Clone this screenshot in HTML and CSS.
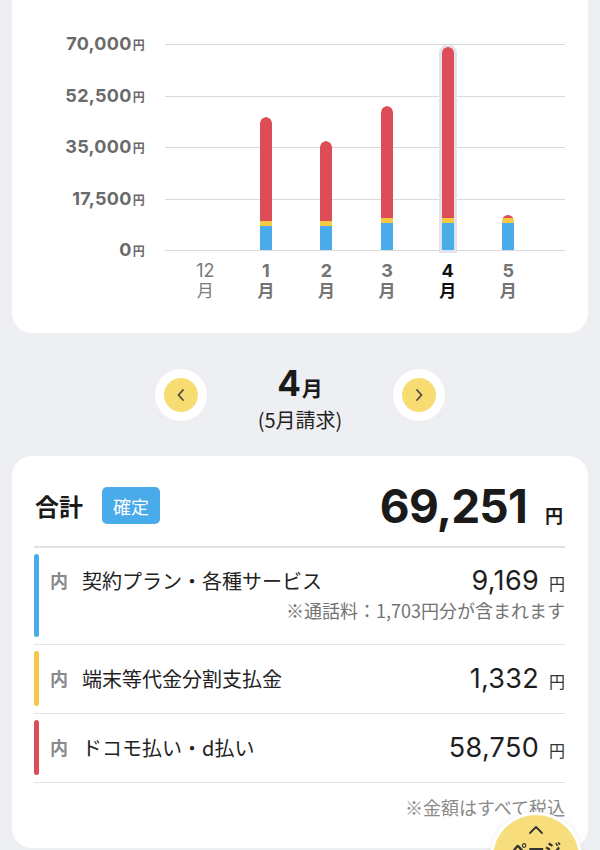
FILE: index.html
```html
<!DOCTYPE html>
<html lang="ja">
<head>
<meta charset="utf-8">
<link rel="stylesheet" href="styles.css">
</head>
<body>
<section class="chart-card">
  <div class="chart">
    <div class="y-axis">
      <div class="y-label">70,000<span class="yen">円</span></div>
      <div class="y-label">52,500<span class="yen">円</span></div>
      <div class="y-label">35,000<span class="yen">円</span></div>
      <div class="y-label">17,500<span class="yen">円</span></div>
      <div class="y-label">0<span class="yen">円</span></div>
    </div>
    <div class="plot">
      <div class="grid-lines">
        <div class="line"></div><div class="line"></div><div class="line"></div><div class="line"></div><div class="line"></div>
      </div>
      <div class="bars">
        <div class="col"></div>
        <div class="col"><div class="bar"><div class="seg red" style="height:104px"></div><div class="seg yellow" style="height:5px"></div><div class="seg blue" style="height:24px"></div></div></div>
        <div class="col"><div class="bar"><div class="seg red" style="height:80px"></div><div class="seg yellow" style="height:5px"></div><div class="seg blue" style="height:24px"></div></div></div>
        <div class="col"><div class="bar"><div class="seg red" style="height:112px"></div><div class="seg yellow" style="height:5px"></div><div class="seg blue" style="height:27px"></div></div></div>
        <div class="col"><div class="bar active"><div class="seg red" style="height:171px"></div><div class="seg yellow" style="height:5px"></div><div class="seg blue" style="height:27px"></div></div></div>
        <div class="col"><div class="bar"><div class="seg red" style="height:3px"></div><div class="seg yellow" style="height:5px"></div><div class="seg blue" style="height:27px"></div></div></div>
      </div>
    </div>
    <div class="months">
      <div class="month light"><span class="m-num">12</span><span class="m-unit">月</span></div>
      <div class="month"><span class="m-num">1</span><span class="m-unit">月</span></div>
      <div class="month"><span class="m-num">2</span><span class="m-unit">月</span></div>
      <div class="month"><span class="m-num">3</span><span class="m-unit">月</span></div>
      <div class="month current"><span class="m-num">4</span><span class="m-unit">月</span></div>
      <div class="month"><span class="m-num">5</span><span class="m-unit">月</span></div>
    </div>
  </div>
</section>

<nav class="month-nav">
  <button class="nav-btn" aria-label="前月">
    <span class="nav-inner">
      <svg width="10" height="14" viewBox="0 0 10 14"><path d="M7 2 L2.5 7 L7 12" fill="none" stroke="#4a4a4a" stroke-width="1.8" stroke-linecap="round" stroke-linejoin="round"/></svg>
    </span>
  </button>
  <div class="nav-title">
    <div class="nav-month"><span class="big">4</span>月</div>
    <div class="nav-sub">(5月請求)</div>
  </div>
  <button class="nav-btn" aria-label="次月">
    <span class="nav-inner">
      <svg width="10" height="14" viewBox="0 0 10 14"><path d="M3 2 L7.5 7 L3 12" fill="none" stroke="#4a4a4a" stroke-width="1.8" stroke-linecap="round" stroke-linejoin="round"/></svg>
    </span>
  </button>
</nav>

<section class="bill-card">
  <div class="total-row">
    <div class="total-left">
      <span class="total-label">合計</span>
      <span class="badge">確定</span>
    </div>
    <div class="total-amount"><span class="total-num">69,251</span><span class="total-yen">円</span></div>
  </div>

  <div class="item">
    <div class="item-bar blue"></div>
    <div class="item-body first">
      <div class="item-main">
        <span class="uchi">内</span>
        <span class="item-name">契約プラン・各種サービス</span>
        <span class="item-amount"><span class="num">9,169</span><span class="iyen">円</span></span>
      </div>
      <div class="item-note">※通話料：1,703円分が含まれます</div>
    </div>
  </div>

  <div class="item">
    <div class="item-bar yellow"></div>
    <div class="item-body">
      <div class="item-main">
        <span class="uchi">内</span>
        <span class="item-name">端末等代金分割支払金</span>
        <span class="item-amount"><span class="num">1,332</span><span class="iyen">円</span></span>
      </div>
    </div>
  </div>

  <div class="item">
    <div class="item-bar red"></div>
    <div class="item-body">
      <div class="item-main">
        <span class="uchi">内</span>
        <span class="item-name">ドコモ払い・d払い</span>
        <span class="item-amount"><span class="num">58,750</span><span class="iyen">円</span></span>
      </div>
    </div>
  </div>

  <div class="tax-note">※金額はすべて税込</div>
</section>

<button class="page-top">
  <svg width="16" height="10" viewBox="0 0 16 10"><path d="M2 8 L8 2 L14 8" fill="none" stroke="#333" stroke-width="1.8" stroke-linecap="round" stroke-linejoin="round"/></svg>
  <span class="page-top-text">ページ<br>トップ</span>
</button>
</body>
</html>
```

FILE: styles.css
```css
* { box-sizing: border-box; }

html, body {
  margin: 0;
  padding: 0;
  background: #eeeff3;
  font-family: "Noto Sans CJK JP", sans-serif;
  color: #222;
  overflow: hidden;
  height: 850px;
}

.chart-card {
  margin: -20px 12px 0;
  padding: 54px 23px 0 0;
  height: 353px;
  background: #fff;
  border-radius: 0 0 20px 20px;
}

.chart {
  display: grid;
  grid-template-columns: 133px 400px;
  grid-template-rows: 226px auto;
  column-gap: 20px;
}

.y-axis {
  grid-column: 1;
  grid-row: 1;
  height: 226px;
  display: flex;
  flex-direction: column;
  justify-content: space-between;
  align-items: flex-end;
}

.y-label {
  height: 20px;
  line-height: 20px;
  font-family: Inter, "Noto Sans CJK JP", sans-serif;
  font-weight: 700;
  font-size: 18px;
  letter-spacing: 0.3px;
  color: #6a6a6a;
}

.y-label .yen {
  font-family: "Noto Sans CJK JP", sans-serif;
  font-size: 12px;
  font-weight: 700;
  margin-left: 1px;
}

.plot {
  grid-column: 2;
  grid-row: 1;
  margin-top: 10px;
  height: 207px;
  display: grid;
}

.grid-lines, .bars {
  grid-area: 1 / 1;
}

.grid-lines {
  display: flex;
  flex-direction: column;
  justify-content: space-between;
}

.line {
  height: 1px;
  background: #d9d9dc;
}

.bars {
  display: flex;
  align-items: flex-end;
  padding-left: 10px;
  padding-bottom: 1px;
}

.col {
  width: 60.6px;
  display: flex;
  justify-content: center;
}

.bar {
  width: 12px;
  display: flex;
  flex-direction: column;
  border-radius: 6px 6px 0 0;
  overflow: hidden;
}

.bar.active {
  box-shadow: 0 0 0 3px #e1e4ea;
  overflow: visible;
}

.seg.red { background: #dc4d57; }
.bar .seg:first-child { border-radius: 6px 6px 0 0; }
.seg.yellow { background: #f5c945; }
.seg.blue { background: #4aabea; }

.months {
  grid-column: 2;
  grid-row: 2;
  display: flex;
  padding-left: 10px;
  padding-top: 1px;
}

.month {
  width: 60.6px;
  display: flex;
  flex-direction: column;
  align-items: center;
  font-weight: 700;
  color: #747474;
}

.m-num {
  display: block;
  height: 19px;
  line-height: 19px;
  font-family: Inter, sans-serif;
  font-size: 18px;
}

.m-unit {
  display: block;
  height: 19px;
  line-height: 19px;
  font-size: 17px;
}

.month.light {
  font-weight: 400;
  color: #7a7a7a;
}

.month.current {
  color: #111;
}

.month-nav {
  height: 123px;
  padding-top: 36px;
  display: flex;
  justify-content: center;
  align-items: flex-start;
}

.nav-btn {
  width: 52px;
  height: 52px;
  border: none;
  padding: 0;
  border-radius: 50%;
  background: #fff;
  display: flex;
  align-items: center;
  justify-content: center;
}

.nav-inner {
  width: 34px;
  height: 34px;
  border-radius: 50%;
  background: #f7dc72;
  display: flex;
  align-items: center;
  justify-content: center;
}

.nav-title {
  width: 186px;
  margin-top: -6px;
  text-align: center;
}

.nav-month {
  height: 40px;
  line-height: 40px;
  font-weight: 700;
  font-size: 21px;
  color: #1a1a1a;
}

.nav-month .big {
  font-family: Inter, sans-serif;
  font-size: 35px;
  margin-right: 1px;
}

.nav-sub {
  height: 28px;
  line-height: 28px;
  font-size: 20px;
  color: #222;
  margin-top: 3px;
}

.bill-card {
  margin: 0 12px;
  padding: 0 23px 29px 22px;
  background: #fff;
  border-radius: 20px;
}

.total-row {
  height: 92px;
  display: flex;
  justify-content: space-between;
  align-items: center;
  padding-top: 9px;
  border-bottom: 2px solid #dfe1e6;
}

.total-left {
  display: flex;
  align-items: center;
  gap: 19px;
}

.total-label {
  font-size: 24px;
  font-weight: 700;
  color: #1a1a1a;
  margin-left: 1px;
}

.badge {
  width: 58px;
  height: 37px;
  border-radius: 5px;
  background: #4aabea;
  color: #fff;
  font-size: 18px;
  display: flex;
  align-items: center;
  justify-content: center;
}

.total-amount {
  display: flex;
  align-items: baseline;
  gap: 18px;
  height: 40px;
  line-height: 40px;
  margin-right: 2px;
}

.total-num {
  font-family: Inter, sans-serif;
  font-weight: 700;
  font-size: 46px;
  letter-spacing: -0.8px;
  color: #1a1a1a;
}

.total-yen {
  font-size: 18px;
  font-weight: 700;
  color: #1a1a1a;
}

.item {
  display: flex;
  padding: 6px 0 7px;
  border-bottom: 1px solid #e2e3e7;
}

.item-bar {
  width: 5px;
  border-radius: 3px;
  flex: none;
}

.item-bar.blue { background: #4aabea; }
.item-bar.yellow { background: #f5c945; }
.item-bar.red { background: #dc4d57; }

.item-body {
  flex: 1;
  padding: 14px 0 15px 11px;
}

.item-body.first {
  padding-top: 13px;
}

.item-main {
  display: flex;
  align-items: center;
  height: 26px;
}

.uchi {
  font-size: 18px;
  font-weight: 700;
  color: #8a8a8e;
  width: 32px;
}

.item-name {
  flex: 1;
  font-size: 20px;
  color: #222;
}

.item-amount {
  display: flex;
  align-items: baseline;
  gap: 10px;
}

.item-amount .num {
  font-family: Inter, sans-serif;
  font-size: 27px;
  letter-spacing: 0.3px;
  color: #1e1e1e;
}

.item-amount .iyen {
  font-size: 16px;
  color: #333;
}

.item-note {
  margin-top: 5px;
  height: 24px;
  line-height: 24px;
  text-align: right;
  font-size: 18px;
  color: #737373;
}

.tax-note {
  padding-top: 12px;
  line-height: 24px;
  text-align: right;
  font-size: 18px;
  color: #8a8a8a;
}

.page-top {
  position: fixed;
  left: 490px;
  top: 812px;
  width: 92px;
  height: 92px;
  border-radius: 50%;
  border: 3px solid #fff;
  background: #f8dd7c;
  box-shadow: 0 0 6px rgba(0,0,0,0.08);
  display: flex;
  flex-direction: column;
  align-items: center;
  padding: 10px 0 0;
  font-family: "Noto Sans CJK JP", sans-serif;
}

.page-top-text {
  margin-top: 4px;
  font-size: 17px;
  font-weight: 700;
  line-height: 20px;
  color: #333;
}
```
